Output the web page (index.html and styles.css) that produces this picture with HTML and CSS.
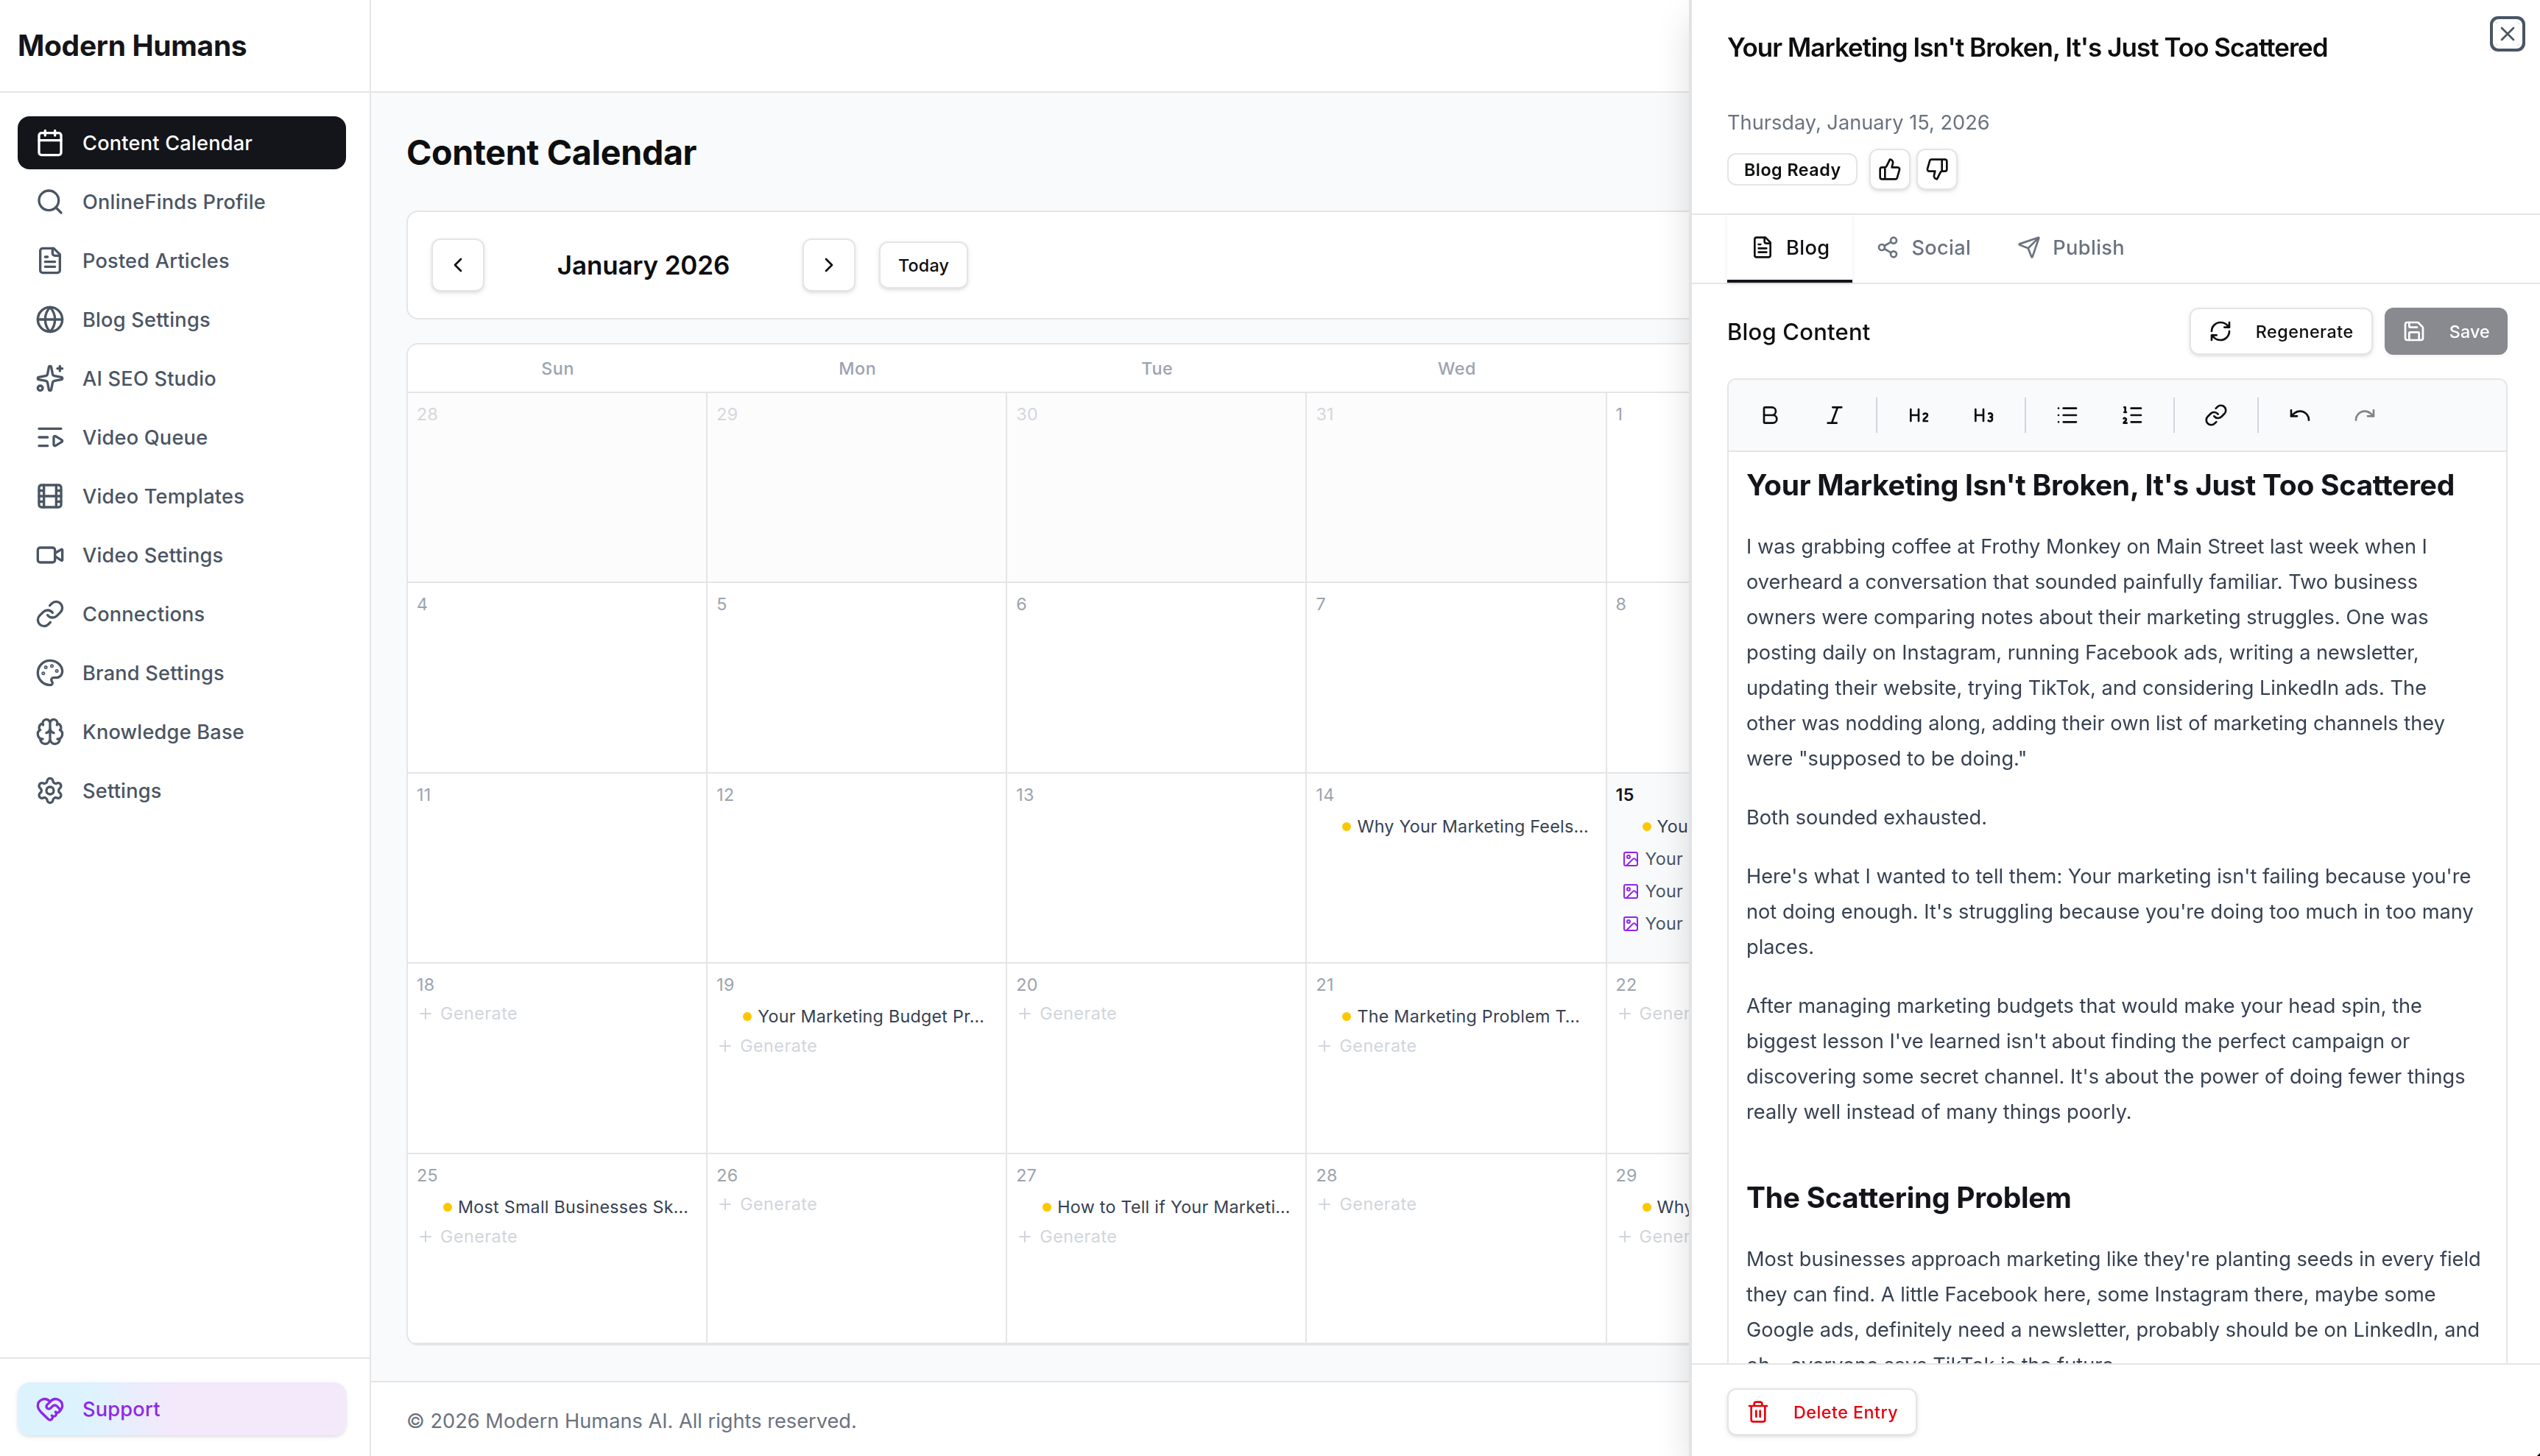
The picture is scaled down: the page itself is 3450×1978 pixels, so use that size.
FILE: index.html
```html
<!DOCTYPE html>
<html lang="en">
<head>
<meta charset="utf-8">
<title>Content Calendar</title>
<link rel="stylesheet" href="styles.css">
</head>
<body>
<svg class="sprite" aria-hidden="true">
  <symbol id="calendar" viewBox="0 0 24 24"><path d="M8 2v4M16 2v4M3 10h18"/><rect width="18" height="18" x="3" y="4" rx="2"/></symbol>
  <symbol id="search" viewBox="0 0 24 24"><circle cx="11" cy="11" r="8"/><path d="m21 21-4.34-4.34"/></symbol>
  <symbol id="file" viewBox="0 0 24 24"><path d="M15 2H6a2 2 0 0 0-2 2v16a2 2 0 0 0 2 2h12a2 2 0 0 0 2-2V7Z"/><path d="M14 2v4a2 2 0 0 0 2 2h4M10 9H8M16 13H8M16 17H8"/></symbol>
  <symbol id="globe" viewBox="0 0 24 24"><circle cx="12" cy="12" r="10"/><path d="M12 2a14.5 14.5 0 0 0 0 20 14.5 14.5 0 0 0 0-20M2 12h20"/></symbol>
  <symbol id="sparkles" viewBox="0 0 24 24"><path d="M11.017 2.814a1 1 0 0 1 1.966 0l1.051 5.558a2 2 0 0 0 1.594 1.594l5.558 1.051a1 1 0 0 1 0 1.966l-5.558 1.051a2 2 0 0 0-1.594 1.594l-1.051 5.558a1 1 0 0 1-1.966 0l-1.051-5.558a2 2 0 0 0-1.594-1.594l-5.558-1.051a1 1 0 0 1 0-1.966l5.558-1.051a2 2 0 0 0 1.594-1.594zM20 2v4M22 4h-4"/><circle cx="4" cy="20" r="2"/></symbol>
  <symbol id="queue" viewBox="0 0 24 24"><path d="M21 5H3M10 12H3M10 19H3M15 12.003a1 1 0 0 1 1.517-.859l4.997 2.997a1 1 0 0 1 0 1.718l-4.997 2.997a1 1 0 0 1-1.517-.86z"/></symbol>
  <symbol id="film" viewBox="0 0 24 24"><rect width="18" height="18" x="3" y="3" rx="2"/><path d="M7 3v18M3 7.5h4M3 12h18M3 16.5h4M17 3v18M17 7.5h4M17 16.5h4"/></symbol>
  <symbol id="video" viewBox="0 0 24 24"><path d="m16 13 5.223 3.482a.5.5 0 0 0 .777-.416V7.87a.5.5 0 0 0-.752-.432L16 10.5"/><rect x="2" y="6" width="14" height="12" rx="2"/></symbol>
  <symbol id="link" viewBox="0 0 24 24"><path d="M10 13a5 5 0 0 0 7.54.54l3-3a5 5 0 0 0-7.07-7.07l-1.72 1.71"/><path d="M14 11a5 5 0 0 0-7.54-.54l-3 3a5 5 0 0 0 7.07 7.07l1.71-1.71"/></symbol>
  <symbol id="palette" viewBox="0 0 24 24"><path d="M12 22a1 1 0 0 1 0-20 10 9 0 0 1 10 9 5 5 0 0 1-5 5h-2.25a1.75 1.75 0 0 0-1.4 2.8l.3.4a1.75 1.75 0 0 1-1.4 2.8z"/><circle cx="13.5" cy="6.5" r=".5"/><circle cx="17.5" cy="10.5" r=".5"/><circle cx="6.5" cy="12.5" r=".5"/><circle cx="8.5" cy="7.5" r=".5"/></symbol>
  <symbol id="brain" viewBox="0 0 24 24"><path d="M12 18V5M15 13a4.17 4.17 0 0 1-3-4 4.17 4.17 0 0 1-3 4M17.598 6.5A3 3 0 1 0 12 5a3 3 0 1 0-5.598 1.5M17.997 5.125a4 4 0 0 1 2.526 5.77M18 18a4 4 0 0 0 2-7.464M19.967 17.483A4 4 0 1 1 12 18a4 4 0 1 1-7.967-.517M6 18a4 4 0 0 1-2-7.464M6.003 5.125a4 4 0 0 0-2.526 5.77"/></symbol>
  <symbol id="gear" viewBox="0 0 24 24"><path d="M9.671 4.136a2.34 2.34 0 0 1 4.659 0 2.34 2.34 0 0 0 3.319 1.915 2.34 2.34 0 0 1 2.33 4.033 2.34 2.34 0 0 0 0 3.831 2.34 2.34 0 0 1-2.33 4.033 2.34 2.34 0 0 0-3.319 1.915 2.34 2.34 0 0 1-4.659 0 2.34 2.34 0 0 0-3.32-1.915 2.34 2.34 0 0 1-2.33-4.033 2.34 2.34 0 0 0 0-3.831A2.34 2.34 0 0 1 6.35 6.051a2.34 2.34 0 0 0 3.319-1.915"/><circle cx="12" cy="12" r="3"/></symbol>
  <symbol id="heart" viewBox="0 0 24 24"><path d="M19.414 14.414C21 12.828 22 11.5 22 9.5a5.5 5.5 0 0 0-9.591-3.676.6.6 0 0 1-.818.001A5.5 5.5 0 0 0 2 9.5c0 2.3 1.5 4 3 5.5l5.535 5.362a2 2 0 0 0 2.879.052 2.12 2.12 0 0 0-.004-3 2.124 2.124 0 1 0 3-3 2.124 2.124 0 0 0 3.004 0 2 2 0 0 0 0-2.828l-1.881-1.882a2.41 2.41 0 0 0-3.409 0l-1.71 1.71a2 2 0 0 1-2.828 0 2 2 0 0 1 0-2.828l2.823-2.762"/></symbol>
  <symbol id="left" viewBox="0 0 24 24"><path d="m15 18-6-6 6-6"/></symbol>
  <symbol id="right" viewBox="0 0 24 24"><path d="m9 18 6-6-6-6"/></symbol>
  <symbol id="plus" viewBox="0 0 24 24"><path d="M5 12h14M12 5v14"/></symbol>
  <symbol id="image" viewBox="0 0 24 24"><rect width="18" height="18" x="3" y="3" rx="2"/><circle cx="9" cy="9" r="2"/><path d="m21 15-3.086-3.086a2 2 0 0 0-2.828 0L6 21"/></symbol>
  <symbol id="close" viewBox="0 0 24 24"><path d="M18 6 6 18M6 6l12 12"/></symbol>
  <symbol id="up" viewBox="0 0 24 24"><path d="M7 10v12M15 5.88 14 10h5.83a2 2 0 0 1 1.92 2.56l-2.33 8A2 2 0 0 1 17.5 22H4a2 2 0 0 1-2-2v-8a2 2 0 0 1 2-2h2.76a2 2 0 0 0 1.79-1.11L12 2a3.13 3.13 0 0 1 3 3.88Z"/></symbol>
  <symbol id="down" viewBox="0 0 24 24"><path d="M17 14V2M9 18.12 10 14H4.17a2 2 0 0 1-1.92-2.56l2.33-8A2 2 0 0 1 6.5 2H20a2 2 0 0 1 2 2v8a2 2 0 0 1-2 2h-2.76a2 2 0 0 0-1.79 1.11L12 22a3.13 3.13 0 0 1-3-3.88Z"/></symbol>
  <symbol id="share" viewBox="0 0 24 24"><circle cx="18" cy="5" r="3"/><circle cx="6" cy="12" r="3"/><circle cx="18" cy="19" r="3"/><path d="m8.59 13.51 6.83 3.98M15.41 6.51l-6.82 3.98"/></symbol>
  <symbol id="send" viewBox="0 0 24 24"><path d="M14.536 21.686a.5.5 0 0 0 .937-.024l6.5-19a.496.496 0 0 0-.635-.635l-19 6.5a.5.5 0 0 0-.024.937l7.93 3.18a2 2 0 0 1 1.112 1.11zM21.854 2.147l-10.94 10.939"/></symbol>
  <symbol id="refresh" viewBox="0 0 24 24"><path d="M3 12a9 9 0 0 1 9-9 9.75 9.75 0 0 1 6.74 2.74L21 8M21 3v5h-5M21 12a9 9 0 0 1-9 9 9.75 9.75 0 0 1-6.74-2.74L3 16M8 16H3v5"/></symbol>
  <symbol id="save" viewBox="0 0 24 24"><path d="M15.2 3a2 2 0 0 1 1.4.6l3.8 3.8a2 2 0 0 1 .6 1.4V19a2 2 0 0 1-2 2H5a2 2 0 0 1-2-2V5a2 2 0 0 1 2-2z"/><path d="M17 21v-7a1 1 0 0 0-1-1H8a1 1 0 0 0-1 1v7M7 3v4a1 1 0 0 0 1 1h7"/></symbol>
  <symbol id="bold" viewBox="0 0 24 24"><path d="M6 12h9a4 4 0 0 1 0 8H7a1 1 0 0 1-1-1V5a1 1 0 0 1 1-1h7a4 4 0 0 1 0 8"/></symbol>
  <symbol id="italic" viewBox="0 0 24 24"><path d="M19 4h-9M14 20H5M15 4 9 20"/></symbol>
  <symbol id="h2" viewBox="0 0 24 24"><path d="M4 12h8M4 18V6M12 18V6M21 18h-4c0-4 4-3 4-6 0-1.5-2-2.5-4-1"/></symbol>
  <symbol id="h3" viewBox="0 0 24 24"><path d="M4 12h8M4 18V6M12 18V6M17.5 10.5c1.7-1 3.5 0 3.5 1.5a2 2 0 0 1-2 2M17 17.5c2 1.5 4 .3 4-1.5a2 2 0 0 0-2-2"/></symbol>
  <symbol id="list" viewBox="0 0 24 24"><path d="M3 5h.01M3 12h.01M3 19h.01M8 5h13M8 12h13M8 19h13"/></symbol>
  <symbol id="ordered" viewBox="0 0 24 24"><path d="M11 5h10M11 12h10M11 19h10M4 4h1v5M4 9h2M6.5 20H3.4c0-1 2.6-1.925 2.6-3.5a1.5 1.5 0 0 0-2.6-1.02"/></symbol>
  <symbol id="undo" viewBox="0 0 24 24"><path d="M3 7v6h6"/><path d="M21 17a9 9 0 0 0-9-9 9 9 0 0 0-6 2.3L3 13"/></symbol>
  <symbol id="redo" viewBox="0 0 24 24"><path d="M21 7v6h-6"/><path d="M3 17a9 9 0 0 1 9-9 9 9 0 0 1 6 2.3l3 2.7"/></symbol>
  <symbol id="trash" viewBox="0 0 24 24"><path d="M10 11v6M14 11v6M19 6v14a2 2 0 0 1-2 2H7a2 2 0 0 1-2-2V6M3 6h18M8 6V4a2 2 0 0 1 2-2h4a2 2 0 0 1 2 2v2"/></symbol>
</svg>

<div class="app">
  <aside class="sidebar">
    <div class="brand">Modern Humans</div>
    <nav class="nav">
      <a class="nav-item active"><svg class="i40"><use href="#calendar"/></svg>Content Calendar</a>
      <a class="nav-item"><svg class="i40"><use href="#search"/></svg>OnlineFinds Profile</a>
      <a class="nav-item"><svg class="i40"><use href="#file"/></svg>Posted Articles</a>
      <a class="nav-item"><svg class="i40"><use href="#globe"/></svg>Blog Settings</a>
      <a class="nav-item"><svg class="i40"><use href="#sparkles"/></svg>AI SEO Studio</a>
      <a class="nav-item"><svg class="i40"><use href="#queue"/></svg>Video Queue</a>
      <a class="nav-item"><svg class="i40"><use href="#film"/></svg>Video Templates</a>
      <a class="nav-item"><svg class="i40"><use href="#video"/></svg>Video Settings</a>
      <a class="nav-item"><svg class="i40"><use href="#link"/></svg>Connections</a>
      <a class="nav-item"><svg class="i40"><use href="#palette"/></svg>Brand Settings</a>
      <a class="nav-item"><svg class="i40"><use href="#brain"/></svg>Knowledge Base</a>
      <a class="nav-item"><svg class="i40"><use href="#gear"/></svg>Settings</a>
    </nav>
    <div class="sidebar-foot">
      <a class="nav-item support"><svg class="i40"><use href="#heart"/></svg>Support</a>
    </div>
  </aside>

  <div class="main">
    <header class="topbar"></header>
    <main class="content">
      <h1 class="page-title">Content Calendar</h1>
      <div class="month-bar">
        <button class="btn square"><svg class="i32"><use href="#left"/></svg></button>
        <div class="month">January 2026</div>
        <button class="btn square"><svg class="i32"><use href="#right"/></svg></button>
        <button class="btn today-btn">Today</button>
      </div>
      <div class="calendar">
        <div class="weekdays"><div>Sun</div><div>Mon</div><div>Tue</div><div>Wed</div><div></div><div></div><div></div></div>
        <div class="days">
          <div class="day out"><div class="num">28</div></div>
          <div class="day out"><div class="num">29</div></div>
          <div class="day out"><div class="num">30</div></div>
          <div class="day out"><div class="num">31</div></div>
          <div class="day"><div class="num">1</div></div>
          <div class="day"></div>
          <div class="day"></div>

          <div class="day"><div class="num">4</div></div>
          <div class="day"><div class="num">5</div></div>
          <div class="day"><div class="num">6</div></div>
          <div class="day"><div class="num">7</div></div>
          <div class="day"><div class="num">8</div></div>
          <div class="day"></div>
          <div class="day"></div>

          <div class="day"><div class="num">11</div></div>
          <div class="day"><div class="num">12</div></div>
          <div class="day"><div class="num">13</div></div>
          <div class="day"><div class="num">14</div><div class="event"><i class="dot"></i><span>Why Your Marketing Feels…</span></div></div>
          <div class="day today"><div class="num">15</div>
            <div class="event"><i class="dot"></i><span>You</span></div>
            <div class="event post"><svg class="i24"><use href="#image"/></svg><span>Your</span></div>
            <div class="event post"><svg class="i24"><use href="#image"/></svg><span>Your</span></div>
            <div class="event post"><svg class="i24"><use href="#image"/></svg><span>Your</span></div>
          </div>
          <div class="day"></div>
          <div class="day"></div>

          <div class="day"><div class="num">18</div><div class="gen"><svg class="i24"><use href="#plus"/></svg>Generate</div></div>
          <div class="day"><div class="num">19</div><div class="event"><i class="dot"></i><span>Your Marketing Budget Pr…</span></div><div class="gen"><svg class="i24"><use href="#plus"/></svg>Generate</div></div>
          <div class="day"><div class="num">20</div><div class="gen"><svg class="i24"><use href="#plus"/></svg>Generate</div></div>
          <div class="day"><div class="num">21</div><div class="event"><i class="dot"></i><span>The Marketing Problem T…</span></div><div class="gen"><svg class="i24"><use href="#plus"/></svg>Generate</div></div>
          <div class="day"><div class="num">22</div><div class="gen"><svg class="i24"><use href="#plus"/></svg>Generate</div></div>
          <div class="day"></div>
          <div class="day"></div>

          <div class="day"><div class="num">25</div><div class="event"><i class="dot"></i><span>Most Small Businesses Sk…</span></div><div class="gen"><svg class="i24"><use href="#plus"/></svg>Generate</div></div>
          <div class="day"><div class="num">26</div><div class="gen"><svg class="i24"><use href="#plus"/></svg>Generate</div></div>
          <div class="day"><div class="num">27</div><div class="event"><i class="dot"></i><span>How to Tell if Your Marketi…</span></div><div class="gen"><svg class="i24"><use href="#plus"/></svg>Generate</div></div>
          <div class="day"><div class="num">28</div><div class="gen"><svg class="i24"><use href="#plus"/></svg>Generate</div></div>
          <div class="day"><div class="num">29</div><div class="event"><i class="dot"></i><span>Why</span></div><div class="gen"><svg class="i24"><use href="#plus"/></svg>Generate</div></div>
          <div class="day"></div>
          <div class="day"></div>
        </div>
      </div>
    </main>
    <footer class="foot">© 2026 Modern Humans AI. All rights reserved.</footer>
  </div>
</div>

<section class="panel">
  <button class="close"><svg class="i32"><use href="#close"/></svg></button>
  <header class="panel-head">
    <h2 class="panel-title">Your Marketing Isn't Broken, It's Just Too Scattered</h2>
    <p class="panel-date">Thursday, January 15, 2026</p>
    <div class="panel-status">
      <span class="badge">Blog Ready</span>
      <button class="btn thumb"><svg class="i32"><use href="#up"/></svg></button>
      <button class="btn thumb"><svg class="i32"><use href="#down"/></svg></button>
    </div>
  </header>
  <div class="tabs">
    <div class="tab active"><svg class="i32"><use href="#file"/></svg>Blog</div>
    <div class="tab"><svg class="i32"><use href="#share"/></svg>Social</div>
    <div class="tab"><svg class="i32"><use href="#send"/></svg>Publish</div>
  </div>
  <div class="panel-body">
    <div class="blog-head">
      <h3 class="blog-title">Blog Content</h3>
      <button class="btn action"><svg class="i32"><use href="#refresh"/></svg>Regenerate</button>
      <button class="btn action save"><svg class="i32"><use href="#save"/></svg>Save</button>
    </div>
    <div class="editor">
      <div class="toolbar">
        <span class="tool"><svg class="i32"><use href="#bold"/></svg></span>
        <span class="tool"><svg class="i32"><use href="#italic"/></svg></span>
        <i class="sep"></i>
        <span class="tool"><svg class="i32"><use href="#h2"/></svg></span>
        <span class="tool"><svg class="i32"><use href="#h3"/></svg></span>
        <i class="sep"></i>
        <span class="tool"><svg class="i32"><use href="#list"/></svg></span>
        <span class="tool"><svg class="i32"><use href="#ordered"/></svg></span>
        <i class="sep"></i>
        <span class="tool"><svg class="i32"><use href="#link"/></svg></span>
        <i class="sep"></i>
        <span class="tool"><svg class="i32"><use href="#undo"/></svg></span>
        <span class="tool off"><svg class="i32"><use href="#redo"/></svg></span>
      </div>
      <article class="prose">
        <h1>Your Marketing Isn't Broken, It's Just Too Scattered</h1>
        <p>I was grabbing coffee at Frothy Monkey on Main Street last week when I<br>overheard a conversation that sounded painfully familiar. Two business<br>owners were comparing notes about their marketing struggles. One was<br>posting daily on Instagram, running Facebook ads, writing a newsletter,<br>updating their website, trying TikTok, and considering LinkedIn ads. The<br>other was nodding along, adding their own list of marketing channels they<br>were "supposed to be doing."</p>
        <p>Both sounded exhausted.</p>
        <p>Here's what I wanted to tell them: Your marketing isn't failing because you're<br>not doing enough. It's struggling because you're doing too much in too many<br>places.</p>
        <p>After managing marketing budgets that would make your head spin, the<br>biggest lesson I've learned isn't about finding the perfect campaign or<br>discovering some secret channel. It's about the power of doing fewer things<br>really well instead of many things poorly.</p>
        <h2>The Scattering Problem</h2>
        <p>Most businesses approach marketing like they're planting seeds in every field<br>they can find. A little Facebook here, some Instagram there, maybe some<br>Google ads, definitely need a newsletter, probably should be on LinkedIn, and<br>oh—everyone says TikTok is the future.</p>
      </article>
    </div>
  </div>
  <footer class="panel-foot">
    <button class="btn action delete"><svg class="i32"><use href="#trash"/></svg>Delete Entry</button>
  </footer>
</section>
<div class="corner"></div>
</body>
</html>
```
FILE: styles.css
```css
* { box-sizing: border-box; margin: 0; padding: 0; }
body {
  width: 3450px; height: 1978px; overflow: hidden;
  font-family: Inter, "Liberation Sans", sans-serif;
  font-size: 27.2px; color: #0d0e10; background: #fff;
  white-space: nowrap;
}
button { font: inherit; color: inherit; background: none; border: 0; }
svg { display: block; flex: none; fill: none; stroke: currentColor; stroke-width: 2; stroke-linecap: round; stroke-linejoin: round; }
.sprite { position: absolute; width: 0; height: 0; }
.i24 { width: 24px; height: 24px; }
.i32 { width: 32px; height: 32px; }
.i40 { width: 40px; height: 40px; }

.app { display: flex; width: 3450px; height: 1978px; }

/* Sidebar */
.sidebar { flex: none; width: 504px; border-right: 2px solid #e5e5e5; display: flex; flex-direction: column; }
.brand { height: 126px; border-bottom: 2px solid #e5e5e5; padding-left: 24px; line-height: 124px; font-size: 39px; font-weight: 700; letter-spacing: -.32px; color: #14151a; }
.nav { flex: 1; padding: 32px 32px 0 24px; display: flex; flex-direction: column; gap: 8px; }
.nav-item { display: flex; align-items: center; gap: 24px; height: 72px; padding-left: 24px; border-radius: 16px; color: #4b5563; font-weight: 500; letter-spacing: .2px; }
.nav-item.active { background: #14151a; color: #fff; }
.sidebar-foot { height: 134px; border-top: 2px solid #e5e5e5; padding: 32px 32px 0 24px; }
.nav-item.support { color: #9126e8; background: linear-gradient(90deg, #dcf3fe 20%, #f4e8fb 48%); box-shadow: 0 2px 6px rgb(0 0 0 / .1), 0 2px 4px -2px rgb(0 0 0 / .1); }

/* Main column */
.main { flex: 1; min-width: 0; display: flex; flex-direction: column; background: #f9fafb; }
.topbar { height: 126px; background: #fff; border-bottom: 2px solid #e5e5e5; }
.content { flex: 1; padding: 48px 44px 48px 48px; display: flex; flex-direction: column; }
.page-title { height: 64px; line-height: 66px; margin-bottom: 48px; font-size: 46.6px; font-weight: 700; letter-spacing: -.35px; }
.month-bar { height: 148px; padding: 0 32px; border: 2px solid #e5e5e5; border-radius: 16px; background: #fff; display: flex; align-items: center; margin-bottom: 32px; }
.btn { display: flex; align-items: center; justify-content: center; background: #fff; border: 2px solid #e5e5e5; border-radius: 12px; font-weight: 500; box-shadow: 0 2px 6px rgb(0 0 0 / .1), 0 2px 4px -2px rgb(0 0 0 / .1); }
.square { width: 72px; height: 72px; }
.month { width: 400px; margin: 0 16px; text-align: center; font-size: 35px; font-weight: 600; letter-spacing: -.16px; }
.today-btn { height: 64px; margin-left: 32px; padding: 0 24px; font-size: 23.3px; letter-spacing: .2px; }

.calendar { flex: 1; border: 2px solid #e5e5e5; border-radius: 16px; background: #fff; display: flex; flex-direction: column; overflow: hidden; }
.weekdays { height: 66px; flex: none; border-bottom: 2px solid #e5e5e5; display: grid; grid-template-columns: repeat(7, 1fr); align-items: center; text-align: center; font-size: 23.3px; font-weight: 450; letter-spacing: .6px; color: #9ca3af; }
.days { flex: 1; display: grid; grid-template-columns: repeat(7, minmax(0, 1fr)); grid-template-rows: repeat(5, minmax(0, 1fr)); }
.day { padding: 12px; border-right: 2px solid #e5e5e5; border-bottom: 2px solid #e5e5e5; font-size: 23.3px; overflow: hidden; }
.num { height: 32px; line-height: 34px; margin-bottom: 8px; color: #9ca3af; letter-spacing: .3px; }
.out { background: #fcfcfd; }
.out .num { color: #d4d7dc; }
.today { background: #f9fafb; }
.today .num { color: #14151a; font-weight: 600; }
.event { height: 40px; margin-bottom: 4px; padding: 0 8px 0 36px; display: flex; align-items: center; gap: 8px; color: #374151; letter-spacing: .25px; }
.event span, .gen { line-height: 34px; }
.dot { flex: none; width: 12px; height: 12px; border-radius: 50%; background: #fdc700; }
.post { padding-left: 8px; color: #4b5563; }
.post svg { color: #9126e8; }
.gen { display: flex; align-items: center; gap: 8px; height: 32px; color: #d1d5db; letter-spacing: .5px; }
.foot { height: 102px; border-top: 2px solid #e5e5e5; background: #fff; padding: 33px 48px 0; line-height: 40px; color: #6b7280; letter-spacing: 0; }

/* Slide-over panel */
.panel { position: fixed; top: 0; right: 0; width: 1156px; height: 1978px; background: #fff; border-left: 4px solid #e3e3e4; display: flex; flex-direction: column; box-shadow: 0 20px 50px -6px rgb(0 0 0 / .16); }
.close { position: absolute; top: 30px; right: 28px; width: 32px; height: 32px; border-radius: 4px; color: #4b5563; box-shadow: 0 0 0 4px #fff, 0 0 0 8px #4a5565; }
.panel-head { height: 292px; flex: none; padding: 40px 44px 0 48px; border-bottom: 2px solid #e5e5e5; }
.panel-title { font-size: 35px; line-height: 48px; font-weight: 600; letter-spacing: -.98px; margin-bottom: 59px; }
.panel-date { line-height: 40px; color: #6b7280; margin-bottom: 15px; }
.panel-status { display: flex; align-items: center; gap: 8px; }
.badge { height: 44px; line-height: 41px; padding: 0 20px 0 21px; margin-right: 8px; border: 2px solid #e5e5e5; border-radius: 12px; font-size: 23.3px; font-weight: 600; letter-spacing: .48px; }
.thumb { width: 56px; height: 56px; }
.tabs { height: 94px; flex: none; border-bottom: 2px solid #e5e5e5; padding-left: 48px; display: flex; }
.tab { display: flex; align-items: center; gap: 16px; padding: 0 31px 0 32px; border-bottom: 4px solid transparent; color: #6b7280; font-weight: 500; letter-spacing: .35px; }
.tab.active { color: #0d0e10; border-bottom-color: #14151a; box-shadow: 0 2px 6px rgb(0 0 0 / .08); }
.panel-body { flex: 1; min-height: 0; overflow: hidden; padding: 32px 44px 0 48px; }
.blog-head { display: flex; align-items: center; gap: 16px; height: 64px; margin-bottom: 32px; }
.blog-title { flex: 1; font-size: 31px; font-weight: 500; letter-spacing: .2px; }
.action { height: 64px; padding: 0 24px; gap: 32px; font-size: 23.3px; letter-spacing: .5px; }
.save { background: #888a8f; border-color: #888a8f; color: #fff; padding: 0 22px; box-shadow: 0 2px 6px rgb(0 0 0 / .06); letter-spacing: .2px; }
.editor { height: 1500px; border: 2px solid #e5e5e5; border-radius: 12px; overflow: hidden; }
.toolbar { height: 98px; padding: 16px; background: #f9fafb; border-bottom: 2px solid #e5e5e5; display: flex; align-items: center; gap: 8px; }
.tool { width: 80px; height: 64px; display: flex; align-items: center; justify-content: center; }
.off { opacity: .5; }
.sep { width: 2px; height: 48px; margin: 0 8px; background: #d1d5db; }
.prose { padding: 17px 24px; color: #374151; }
.prose h1, .prose h2 { font-size: 39px; line-height: 56px; font-weight: 700; letter-spacing: -.26px; color: #14151a; margin-bottom: 32px; }
.prose h2 { margin-top: 64px; }
.prose p { line-height: 48px; margin-bottom: 32px; letter-spacing: 0; }
.panel-foot { height: 126px; flex: none; border-top: 2px solid #e5e5e5; background: #fff; padding: 32px 48px 0; display: flex; }
.delete { color: #e7000b; letter-spacing: .48px; }

.corner { position: fixed; right: 0; bottom: 0; width: 4px; height: 4px; background: #000; clip-path: polygon(100% 0, 100% 100%, 0 100%); }
```
